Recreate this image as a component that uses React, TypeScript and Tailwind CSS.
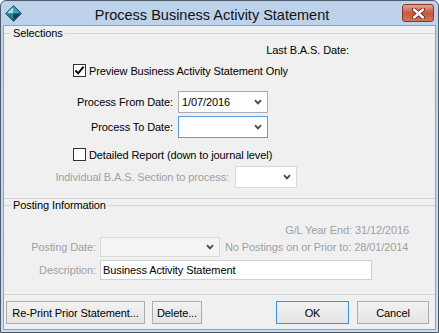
import React from "react";

function Chevron({ color = "#4a4a4a" }: { color?: string }) {
  return (
    <svg width="8" height="6" viewBox="0 0 8 6">
      <path d="M1 1.2 L4 4.4 L7 1.2" fill="none" stroke={color} strokeWidth="1.9" />
    </svg>
  );
}

function Checkbox({ checked }: { checked?: boolean }) {
  return (
    <div className="w-[13px] h-[13px] border border-[#333333] bg-white flex items-center justify-center shrink-0">
      {checked && (
        <svg width="11" height="11" viewBox="0 0 11 11">
          <path d="M1.5 5.5 L4.2 8.3 L9.6 1.6" fill="none" stroke="#000" strokeWidth="1.9" />
        </svg>
      )}
    </div>
  );
}

function GroupHeader({ label, tall }: { label: string; tall?: boolean }) {
  return (
    <div className={tall ? "flex items-center h-[14px]" : "flex items-center h-[12px]"}>
      <div className="w-[7px] h-px bg-[#d5d5d5]" />
      <span className="px-[2px] leading-[12px]">{label}</span>
      <div className="flex-1 h-px bg-[#d5d5d5]" />
    </div>
  );
}

function WinIcon() {
  return (
    <svg width="17" height="17" viewBox="0 0 17 17">
      <path d="M8.5 0.5 L16.5 8.5 L8.5 16.5 L0.5 8.5 Z" fill="#1d5f7c" stroke="#2b4a5c" strokeWidth="0.8" />
      <path d="M8.5 1.5 L8.5 8.5 L1.5 8.5 Z" fill="#9fe3ea" />
      <path d="M8.5 1.5 L15.5 8.5 L8.5 8.5 Z" fill="#3aa5bf" />
      <path d="M1.5 8.5 L8.5 8.5 L8.5 15.5 Z" fill="#2c7f98" />
      <path d="M15.5 8.5 L8.5 8.5 L8.5 15.5 Z" fill="#123f57" />
    </svg>
  );
}

function CloseButton() {
  return (
    <div className="mt-[3px] self-start w-[32px] h-[18px] rounded-[3px] border border-[#8c3428] bg-linear-to-b from-[#e3a394] via-[#c9563f] to-[#d8735d] flex items-center justify-center">
      <svg width="13" height="11" viewBox="0 0 13 11">
        <path d="M2 1.5 L11 9.5 M11 1.5 L2 9.5" stroke="#5b2219" strokeWidth="4.2" strokeLinecap="round" />
        <path d="M2 1.5 L11 9.5 M11 1.5 L2 9.5" stroke="#ffffff" strokeWidth="2.4" strokeLinecap="round" />
      </svg>
    </div>
  );
}

function Button({ label, className }: { label: string; className: string }) {
  return <div className={className}>{label}</div>;
}

export default function App() {
  return (
    <div className="w-[439px] h-[333px] bg-white font-['Liberation_Sans',Arial,sans-serif]">
      <div className="w-[439px] h-[333px] flex flex-col border border-[#4e5c6a] rounded-t-[6px] bg-linear-to-b from-[#bcd2ea] to-[#cadcf0]">
        {/* Title bar */}
        <div className="h-[24px] flex items-center pl-[4px] pr-[4px]">
          <WinIcon />
          <div className="flex-1 text-center text-[14.5px] text-[#111111] leading-[20px] pt-[3px]">
            Process Business Activity Statement
          </div>
          <CloseButton />
        </div>

        {/* Client area */}
        <div className="flex-1 flex flex-col mx-[2px] mb-[2px] border border-[#8fa3b9] bg-[#f0f0f0] text-[11px] tracking-[-0.1px] text-black leading-[14px]">
          <GroupHeader label="Selections" tall />

          <div className="mt-[3px] h-[14px] flex items-center justify-end pr-[86px]">Last B.A.S. Date:</div>

          <div className="mt-[7px] h-[13px] flex items-center pl-[69px] gap-[3px]">
            <Checkbox checked />
            <span>Preview Business Activity Statement Only</span>
          </div>

          <div className="mt-[14px] h-[22px] flex items-center">
            <span className="w-[169px] text-right">Process From Date:</span>
            <div className="ml-[5px] w-[90px] h-[22px] border border-[#acacac] bg-white flex items-center justify-between pl-[3px] pr-[5px]">
              <span>1/07/2016</span>
              <Chevron />
            </div>
          </div>

          <div className="mt-[3px] h-[22px] flex items-center">
            <span className="w-[169px] text-right">Process To Date:</span>
            <div className="ml-[5px] w-[90px] h-[22px] border border-[#569de5] bg-white flex items-center justify-end pr-[5px]">
              <Chevron />
            </div>
          </div>

          <div className="mt-[10px] h-[13px] flex items-center pl-[69px] gap-[3px]">
            <Checkbox />
            <span>Detailed Report (down to journal level)</span>
          </div>

          <div className="mt-[5px] h-[22px] flex items-center">
            <span className="w-[225px] text-right text-[#a0a0a0]">Individual B.A.S. Section to process:</span>
            <div className="ml-[6px] w-[62px] h-[22px] border border-[#d9d9d9] bg-white flex items-center justify-end pr-[5px]">
              <Chevron />
            </div>
          </div>

          <div className="mt-[10px] h-px bg-[#d5d5d5]" />

          <GroupHeader label="Posting Information" />

          <div className="mt-[12px] h-[14px] flex items-center justify-end pr-[26px] text-[#a0a0a0]">
            G/L Year End: 31/12/2016
          </div>

          <div className="h-[20px] flex items-center">
            <span className="w-[92px] text-right text-[#a0a0a0]">Posting Date:</span>
            <div className="ml-[4px] w-[120px] h-[20px] border border-[#d9d9d9] bg-[#f4f4f4] flex items-center justify-end pr-[5px]">
              <Chevron />
            </div>
            <span className="ml-[5px] text-[#a0a0a0]">No Postings on or Prior to: 28/01/2014</span>
          </div>

          <div className="mt-[3px] h-[20px] flex items-center">
            <span className="w-[92px] text-right text-[#a0a0a0]">Description:</span>
            <div className="ml-[4px] w-[272px] h-[20px] border border-[#d0d0d0] bg-white flex items-center pl-[2px]">
              Business Activity Statement
            </div>
          </div>

          <div className="mt-[14px] h-px bg-[#d5d5d5]" />

          <div className="mt-[6px] h-[23px] flex pl-[2px] pr-[6px]">
            <Button
              label="Re-Print Prior Statement..."
              className="w-[139px] h-[23px] border border-[#acacac] bg-linear-to-b from-[#f2f2f2] to-[#e4e4e4] flex items-center justify-center"
            />
            <Button
              label="Delete..."
              className="ml-[7px] w-[50px] h-[23px] border border-[#acacac] bg-linear-to-b from-[#f2f2f2] to-[#e4e4e4] flex items-center justify-center"
            />
            <Button
              label="OK"
              className="ml-auto w-[73px] h-[23px] border border-[#3c8ee0] bg-linear-to-b from-[#f2f2f2] to-[#e4e4e4] flex items-center justify-center"
            />
            <Button
              label="Cancel"
              className="ml-[8px] w-[72px] h-[23px] border border-[#acacac] bg-linear-to-b from-[#f2f2f2] to-[#e4e4e4] flex items-center justify-center"
            />
          </div>
        </div>
      </div>
    </div>
  );
}
